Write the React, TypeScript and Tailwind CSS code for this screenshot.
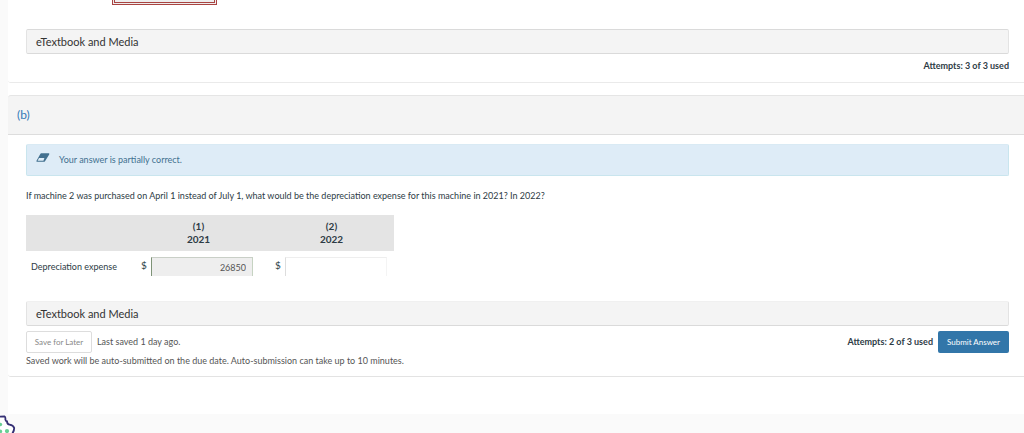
import React from "react";

function MediaBar({ topBorder }: { topBorder: string }) {
  return (
    <button
      type="button"
      className={`block h-[25px] w-full rounded-[2px] border border-x-[#e3e3e3] border-b-[#dadada] bg-[#f4f4f4] px-[9px] text-left text-[11px] leading-[23px] text-[#333333] ${topBorder}`}
    >
      eTextbook and Media
    </button>
  );
}

function EraserIcon() {
  return (
    <svg width="14" height="11" viewBox="0 0 14 11" aria-hidden="true" className="shrink-0">
      <path d="M5.2 1.3H12.7q1 .1.5 1.1L9 9.2q-.4.6-1.1.6H1q-1-.1-.5-1.1L4.3 1.9q.3-.6.9-.6z" fill="#42708f" />
      <path d="M3 6h5.4L7.4 8.8H1.6z" fill="#deecf7" />
    </svg>
  );
}

function CookieIcon() {
  return (
    <svg width="16" height="18" viewBox="0 0 16 18" aria-hidden="true">
      <path
        d="M-8 1.8L4.6 1.5Q5.6 2 5.4 4.6Q5.6 6.2 7 6.4Q7.2 9.6 9.6 9.6Q13.6 10.4 14.2 13Q14.2 16 12 19H-8z"
        fill="#ffffff"
        stroke="#352f74"
        strokeWidth="1.8"
      />
      <circle cx="0.4" cy="9.5" r="1.8" fill="#68cf94" />
      <circle cx="7" cy="16" r="2.1" fill="#68cf94" />
      <circle cx="0.4" cy="16.4" r="1.8" fill="#68cf94" />
    </svg>
  );
}

export default function App() {
  return (
    <div className="relative min-h-screen overflow-hidden bg-[#fafafa] font-[Lato,sans-serif] text-[9px] leading-[13px] text-[#2d3b45]">
      <main className="ml-2 bg-white pb-[37px]">
        <section className="rounded-bl-[3px] border-b border-[#eaeaea] pr-[15px] pb-[10px] pl-[18px]">
          <input
            aria-label="Part a answer"
            disabled
            className="ml-[86px] block h-[5px] w-[105px] border-3 border-t-0 border-double border-[#a94442] bg-[#eeeeee]"
          />
          <div className="pt-6">
            <MediaBar topBorder="border-t-[#dadada]" />
          </div>
          <p className="mt-[5px] text-right font-bold">Attempts: 3 of 3 used</p>
        </section>

        <section className="mt-3 rounded-l-[3px] border-b border-[#e3e3e3]">
          <h2 className="h-10 rounded-tl-[3px] border-y border-t-[#e5e5e5] border-b-[#dddddd] bg-[#f4f4f4] pl-[9px] text-[12px] leading-[38px] text-[#337ab7]">
            (b)
          </h2>
          <div className="pt-[9px] pr-[15px] pb-[9px] pl-[18px]">
            <div
              role="status"
              className="flex h-8 gap-[9px] rounded-[2px] border border-[#c9e5ee] border-t-[#d9eaf4] bg-[#deecf7] pl-[9px] text-[#42708f]"
            >
              <span className="pt-[7px]">
                <EraserIcon />
              </span>
              <span className="pt-2">Your answer is partially correct.</span>
            </div>

            <p className="mt-[13px]">
              If machine 2 was purchased on April 1 instead of July 1, what would be the depreciation expense for this machine in 2021? In 2022?
            </p>

            <table className="mt-[13px] w-[368px] table-fixed border-collapse">
              <colgroup>
                <col className="w-[103px]" />
                <col className="w-[134px]" />
                <col className="w-[131px]" />
              </colgroup>
              <thead>
                <tr className="h-9 bg-[#e4e4e4] text-[10px]">
                  <td />
                  <th scope="col" className="p-0 pl-[5px] text-center font-bold">
                    (1)
                    <br />
                    2021
                  </th>
                  <th scope="col" className="p-0 pl-[6px] text-center font-bold">
                    (2)
                    <br />
                    2022
                  </th>
                </tr>
              </thead>
              <tbody>
                <tr>
                  <th scope="row" className="p-0 pt-[6px] pl-[5px] text-left font-normal whitespace-nowrap">
                    Depreciation expense
                  </th>
                  <td className="p-0 pt-[6px] pl-3">
                    <div className="flex">
                      <label htmlFor="expense-2021" className="w-[10px] pt-[2px] text-[10px]">
                        $
                      </label>
                      <input
                        id="expense-2021"
                        disabled
                        defaultValue="26850"
                        className="h-[19px] w-[102px] border border-b-0 border-t-[#c9cfc7] border-r-[#c6d3c2] border-l-[#7e9377] bg-[#eeeeee] pr-[6px] text-right text-[#555555]"
                      />
                    </div>
                  </td>
                  <td className="p-0 pt-[6px] pl-3">
                    <div className="flex">
                      <label htmlFor="expense-2022" className="w-[10px] pt-[2px] text-[10px]">
                        $
                      </label>
                      <input
                        id="expense-2022"
                        className="h-[19px] w-[102px] border border-b-0 border-t-[#eeeeee] border-r-[#f4f4f4] border-l-[#dddddd] bg-white pr-[6px] text-right text-[#555555]"
                      />
                    </div>
                  </td>
                </tr>
              </tbody>
            </table>

            <div className="mt-[25px]">
              <MediaBar topBorder="border-t-[#f0f0f0]" />
            </div>

            <div className="mt-[5px] flex">
              <button
                type="button"
                className="h-[22px] w-[66px] rounded-[2px] border border-[#dddddd] bg-white text-[8px] whitespace-nowrap text-[#888888]"
              >
                Save for Later
              </button>
              <span className="ml-[5px] pt-[4px] text-[#555555]">Last saved 1 day ago.</span>
              <span className="ml-auto pt-[4px] font-bold">Attempts: 2 of 3 used</span>
              <button
                type="button"
                className="ml-[5px] h-[22px] w-[71px] rounded-[2px] bg-[#3276a9] text-[8px] whitespace-nowrap text-white"
              >
                Submit Answer
              </button>
            </div>
            <p className="mt-px text-[#555555]">
              Saved work will be auto-submitted on the due date. Auto-submission can take up to 10 minutes.
            </p>
          </div>
        </section>
      </main>
      <button type="button" aria-label="Cookie preferences" className="absolute bottom-0 left-0">
        <CookieIcon />
      </button>
    </div>
  );
}
